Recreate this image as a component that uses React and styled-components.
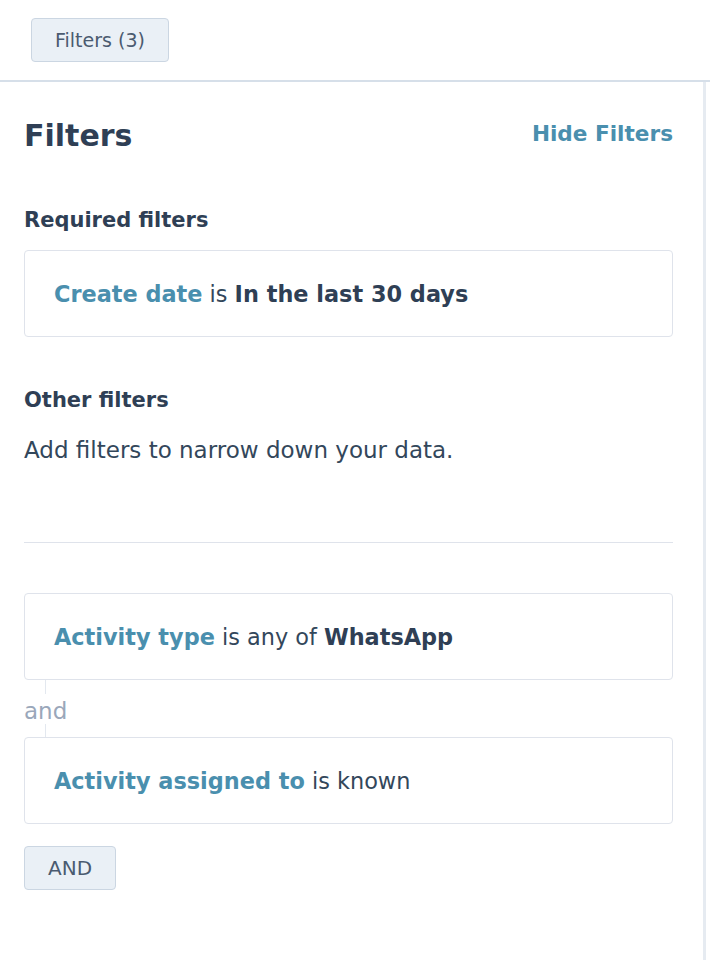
import React from "react";
import styled, { createGlobalStyle } from "styled-components";

const Global = createGlobalStyle`
  html, body { margin: 0; padding: 0; background: #ffffff; }
  body { font-family: "DejaVu Sans", "Noto Sans", sans-serif; color: #33475b; }
  * { box-sizing: border-box; }
`;

const Page = styled.div`
  width: 710px;
  min-height: 960px;
  display: flex;
  flex-direction: column;
`;

const TopBar = styled.div`
  height: 82px;
  padding: 18px 0 0 31px;
  border-bottom: 2px solid #d6dfe9;
`;

const ChipButton = styled.button`
  height: 44px;
  padding: 0 ${(p) => p.$px || 23}px;
  background: #eaf0f6;
  border: 1px solid #cbd6e2;
  border-radius: 4px;
  color: #4b5b70;
  font-family: "DejaVu Sans", "Noto Sans", sans-serif;
  font-size: ${(p) => p.$fs || 19}px;
  font-weight: 400;
  line-height: 1;
`;

const Panel = styled.div`
  flex: 1;
  width: 706px;
  border-right: 3px solid #e6ebf1;
  padding: 34px 30px 0 24px;
  display: flex;
  flex-direction: column;
`;

const Header = styled.div`
  display: flex;
  justify-content: space-between;
  align-items: center;
  height: 40px;
`;

const Title = styled.h1`
  margin: 0;
  font-size: 30px;
  line-height: 40px;
  font-weight: 700;
  color: #2f3f55;
`;

const LinkButton = styled.span`
  font-size: 21.6px;
  line-height: 28px;
  font-weight: 700;
  color: #4a8fae;
  margin-top: -4px;
`;

const SectionTitle = styled.h2`
  margin: ${(p) => p.$mt || 0}px 0 0;
  font-size: 21px;
  font-weight: 700;
  color: #2f3f55;
  line-height: 28px;
`;

const Card = styled.div`
  height: 87px;
  border: 1.5px solid #dfe3eb;
  border-radius: 4px;
  display: flex;
  align-items: center;
  padding: 0 29px;
  font-size: 22.4px;
  color: #33475b;
  margin-top: ${(p) => p.$mt || 0}px;
`;

const Prop = styled.span`
  color: #4a8fae;
  font-weight: 700;
`;

const Value = styled.b`
  color: #2f3f55;
  font-weight: 700;
`;

const Desc = styled.p`
  margin: 22px 0 0;
  font-size: 23px;
  color: #33475b;
  line-height: 28px;
`;

const Divider = styled.hr`
  margin: 78px 0 0;
  border: none;
  border-top: 1.5px solid #dfe3eb;
`;

const Connector = styled.div`
  height: 57px;
  display: flex;
  align-items: center;
  position: relative;
  font-size: 23px;
  color: #9aa7ba;
  &::before {
    content: "";
    position: absolute;
    left: 21px;
    top: 0;
    bottom: 0;
    width: 1px;
    background: #e3e8ef;
  }
`;

const AndText = styled.span`
  position: relative;
  background: #fff;
  line-height: 26px;
  padding-top: 4px;
`;

const Footer = styled.div`
  margin-top: 22px;
`;

export default function App() {
  return (
    <Page>
      <Global />
      <TopBar>
        <ChipButton>Filters (3)</ChipButton>
      </TopBar>
      <Panel>
        <Header>
          <Title>Filters</Title>
          <LinkButton>Hide Filters</LinkButton>
        </Header>
        <SectionTitle $mt={50}>Required filters</SectionTitle>
        <Card $mt={16}>
          <span>
            <Prop>Create date</Prop> is <Value>In the last 30 days</Value>
          </span>
        </Card>
        <SectionTitle $mt={49}>Other filters</SectionTitle>
        <Desc>Add filters to narrow down your data.</Desc>
        <Divider />
        <Card $mt={50}>
          <span>
            <Prop>Activity type</Prop> is any of <Value>WhatsApp</Value>
          </span>
        </Card>
        <Connector>
          <AndText>and</AndText>
        </Connector>
        <Card>
          <span>
            <Prop>Activity assigned to</Prop> is known
          </span>
        </Card>
        <Footer>
          <ChipButton $px={23} $fs={20}>AND</ChipButton>
        </Footer>
      </Panel>
    </Page>
  );
}
